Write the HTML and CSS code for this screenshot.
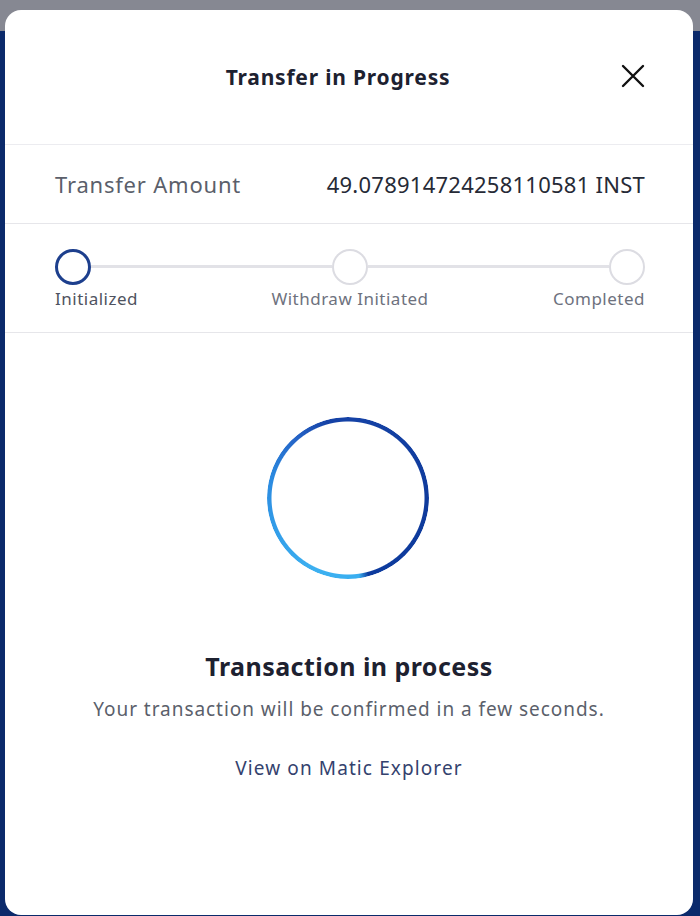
FILE: index.html
```html
<!DOCTYPE html>
<html>
<head>
<meta charset="utf-8">
<link rel="stylesheet" href="styles.css">
</head>
<body>
<div class="backdrop">
  <div class="modal">
    <div class="modal-header">
      <div class="modal-title">Transfer in Progress</div>
      <button class="close-btn" aria-label="Close">
        <svg width="24" height="24" viewBox="0 0 24 24"><path d="M2 2 L22 22 M22 2 L2 22" stroke="#111" stroke-width="2.4" stroke-linecap="round" fill="none"/></svg>
      </button>
    </div>
    <div class="amount-row">
      <span class="amount-label">Transfer Amount</span>
      <span class="amount-value">49.078914724258110581 INST</span>
    </div>
    <div class="stepper">
      <div class="step-track">
        <span class="step-dot active"></span>
        <span class="step-line"></span>
        <span class="step-dot"></span>
        <span class="step-line"></span>
        <span class="step-dot"></span>
      </div>
      <div class="step-labels">
        <span class="step-label first">Initialized</span>
        <span class="step-label mid">Withdraw Initiated</span>
        <span class="step-label last">Completed</span>
      </div>
    </div>
    <div class="status">
      <div class="spinner"></div>
      <div class="status-title">Transaction in process</div>
      <div class="status-sub">Your transaction will be confirmed in a few seconds.</div>
      <a class="status-link" href="#">View on Matic Explorer</a>
    </div>
  </div>
</div>
</body>
</html>
```

FILE: styles.css
```css
* { box-sizing: border-box; }
html, body { margin: 0; padding: 0; }
body {
  width: 700px;
  height: 916px;
  overflow: hidden;
  font-family: "Noto Sans", "Liberation Sans", sans-serif;
  background: linear-gradient(to bottom, #868892 0, #868892 31px, #0b2a6b 31px, #0b2a6b 100%);
}
.backdrop {
  padding: 10px 7px 0 5px;
}
.modal {
  background: #fff;
  border-radius: 16px;
  height: 905px;
  overflow: hidden;
}
.modal-header {
  height: 135px;
  display: flex;
  align-items: center;
  padding: 0 48px 0 50px;
  border-bottom: 1px solid #ececf0;
}
.modal-title {
  flex: 1;
  text-align: center;
  font-size: 21px;
  letter-spacing: 0.8px;
  font-weight: 700;
  color: #1d2130;
}
.close-btn {
  border: 0;
  background: none;
  padding: 0;
  width: 24px;
  height: 24px;
  display: flex;
  margin-top: -2px;
}
.amount-row {
  height: 79px;
  display: flex;
  align-items: center;
  justify-content: space-between;
  padding: 0 48px 0 50px;
  border-bottom: 1px solid #e6e6ea;
}
.amount-label {
  font-size: 22px;
  letter-spacing: 0.8px;
  color: #5b5f6b;
}
.amount-value {
  font-size: 22px;
  letter-spacing: 0.25px;
  color: #262a36;
}
.stepper {
  height: 109px;
  padding: 25px 48px 0 50px;
  border-bottom: 1px solid #e6e6ea;
}
.step-track {
  display: flex;
  align-items: center;
}
.step-dot {
  width: 36px;
  height: 36px;
  border-radius: 50%;
  border: 2px solid #dcdce2;
  flex: none;
}
.step-dot.active {
  border: 3px solid #1d3f8d;
}
.step-line {
  flex: 1;
  height: 3px;
  background: #e2e2e7;
  margin-top: -2px;
}
.step-labels {
  display: grid;
  grid-template-columns: 1fr auto 1fr;
  margin-top: 3px;
  font-size: 17px;
  letter-spacing: 0.5px;
  line-height: 22px;
  color: #6e727e;
}
.step-label.first { justify-self: start; color: #4f5360; }
.step-label.mid { justify-self: center; }
.step-label.last { justify-self: end; }
.status {
  display: flex;
  flex-direction: column;
  align-items: center;
  padding-top: 84px;
}
.spinner {
  width: 162px;
  height: 162px;
  border-radius: 50%;
  margin-left: -2px;
  background: conic-gradient(from 0deg,
    #1542a6 0deg, #0f3b9c 90deg, #0d3b9e 165deg,
    #39aef0 172deg, #3cb0f0 205deg, #34a0ea 240deg,
    #2b8ae0 285deg, #2563c6 320deg, #1542a6 345deg, #1542a6 360deg);
  -webkit-mask: radial-gradient(circle, transparent 76px, #000 77px);
  mask: radial-gradient(circle, transparent 76px, #000 77px);
}
.status-title {
  margin-top: 70px;
  font-size: 25px;
  letter-spacing: 0.45px;
  font-weight: 700;
  color: #1d2130;
}
.status-sub {
  margin-top: 13px;
  font-size: 19px;
  letter-spacing: 0.95px;
  color: #5b5f6b;
}
.status-link {
  margin-top: 33px;
  font-size: 19px;
  letter-spacing: 1.1px;
  color: #34426e;
  text-decoration: none;
}
```
